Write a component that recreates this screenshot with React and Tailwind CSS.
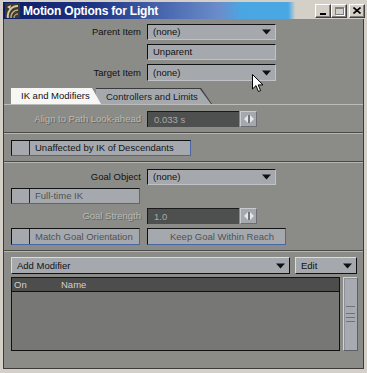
import React from 'react';

const font = "font-['Liberation_Sans',Arial,sans-serif]";

const Arrow = () => (
    <svg width="9" height="6" viewBox="0 0 9 6" className="shrink-0">
        <path d="M0 0.5 H9 L4.5 5.5 Z" fill="#111" />
    </svg>
);

const Dropdown = ({ text, w, className = '' }) => (
    <div className={`h-full flex items-center bg-[#a5a9ae] border-t border-l border-t-[#111] border-l-[#111] border-b border-r border-b-[#bfc3c8] border-r-[#bfc3c8] pl-[5px] pr-[4px] ${w} ${className}`}>
        <span className="text-[#111]">{text}</span>
        <span className="ml-auto"><Arrow /></span>
    </div>
);

const Spin = () => (
    <div className="h-full w-[17px] ml-[1px] flex items-center justify-center bg-[#a5a9ae] border border-t-[#c8ccd0] border-l-[#c8ccd0] border-b-[#6a6e72] border-r-[#6a6e72]">
        <svg width="10" height="8" viewBox="0 0 10 8">
            <path d="M4 0 L0 4 L4 8 Z" fill="#e6e6e6" />
            <path d="M6 0 L10 4 L6 8 Z" fill="#e6e6e6" />
            <rect x="4.3" y="0" width="1.4" height="8" fill="#5a5e62" />
        </svg>
    </div>
);

const DarkField = ({ value }) => (
    <div className="h-full w-[92px] flex items-center bg-[#4e4f4f] border-t border-l border-[#1a1a1a] pl-[6px] text-[#a9aaa8]">
        {value}
    </div>
);

const Row = ({ label, disabled, h = 'h-[16px]', mt, children }) => (
    <div className={`flex items-center pl-[7px] ${h} ${mt}`}>
        <span className={`w-[130px] text-right ${disabled ? 'text-[#b9bab5] [text-shadow:1px_1px_0_#64655f]' : 'text-[#111]'}`}>{label}</span>
        <div className="ml-[6px] h-full flex">{children}</div>
    </div>
);

const Toggle = ({ text, w, box = true, dim, center }) => (
    <div className={`h-full flex items-stretch bg-[#a5a9ae] border border-t-[#111] border-l-[#111] border-b-[#4767a8] border-r-[#4767a8] ${w}`}>
        {box && <div className="w-[18px] border-r border-r-[#2a2a2a] shrink-0" />}
        <span className={`flex items-center ${center ? 'pl-[22px]' : 'pl-[5px]'} ${dim ? 'text-[#4e5256]' : 'text-[#151515]'}`}>{text}</span>
    </div>
);

const Separator = ({ mt }) => (
    <div className={`${mt} h-[2px] border-t border-t-[#4a4b48] border-b border-b-[#b6b7b2]`} />
);

const WinButton = ({ children, className = '' }) => (
    <div className={`w-[16px] h-[14px] bg-[#d4d0c8] border border-t-white border-l-white border-b-[#404040] border-r-[#404040] shadow-[inset_-1px_-1px_#808080] flex items-center justify-center ${className}`}>
        {children}
    </div>
);

export default function App() {
    return (
        <div className={`relative w-[367px] h-[373px] bg-[#d4d0c8] pt-[2px] px-[3px] text-[9.5px] leading-none select-none overflow-hidden ${font}`}>
            {/* title bar */}
            <div className="h-[17px] flex items-center bg-[linear-gradient(to_right,#0c1c66_0%,#1e3484_25%,#4a68b0_45%,#6b8dca_60%,#4aa6e2_66%,#48a8e4_79%,#d4d0c8_81%)]">
                <svg width="15" height="15" viewBox="0 0 15 15" className="ml-[2px] shrink-0">
                    <rect width="15" height="15" fill="#3b3a30" />
                    <path d="M3 15 A10 10 0 0 1 13 3" stroke="#d8c79a" strokeWidth="2" fill="none" />
                    <path d="M6 15 A7 7 0 0 1 13 7" stroke="#bfae82" strokeWidth="1.5" fill="none" />
                    <path d="M9 15 A4 4 0 0 1 13 11" stroke="#a8996f" strokeWidth="1.5" fill="none" />
                    <path d="M2 4 L6 2 L5 6 Z" fill="#e0d4b0" />
                </svg>
                <span className="ml-[3px] text-white font-bold text-[12px] tracking-[-0.2px]">Motion Options for Light</span>
                <div className="ml-auto mr-[-1px] flex items-center">
                    <WinButton>
                        <div className="w-[6px] h-[2px] bg-black mt-[6px] mr-[1px]" />
                    </WinButton>
                    <WinButton>
                        <div className="w-[9px] h-[8px] border border-[#808080] border-t-2 shadow-[1px_1px_0_white]" />
                    </WinButton>
                    <WinButton className="ml-[2px]">
                        <svg width="8" height="7" viewBox="0 0 8 7">
                            <path d="M0.5 0.5 L7.5 6.5 M7.5 0.5 L0.5 6.5" stroke="#000" strokeWidth="1.6" />
                        </svg>
                    </WinButton>
                </div>
            </div>

            {/* body */}
            <div className="h-[350px] bg-[#8b8c87] border-l border-r border-b border-[#3c3c3a] flex flex-col">
                <Row label="Parent Item" mt="mt-[5px]">
                    <Dropdown text="(none)" w="w-[129px]" />
                </Row>
                <Row label="" mt="mt-[4px]">
                    <div className="h-full w-[129px] flex items-center bg-[#a5a9ae] border-t border-l border-t-[#111] border-l-[#111] border-b border-r border-b-[#bfc3c8] border-r-[#bfc3c8] pl-[5px] text-[#111]">
                        Unparent
                    </div>
                </Row>
                <Row label="Target Item" h="h-[17px]" mt="mt-[4px]">
                    <Dropdown text="(none)" w="w-[129px]" />
                </Row>

                {/* tabs */}
                <div className="mt-[7px] h-[16px] flex pl-[7px]">
                    <div className="relative z-10 w-[90px] h-full bg-[#f6f6f4] [clip-path:polygon(0_0,calc(100%-9px)_0,100%_100%,0_100%)] flex items-center pl-[10px] text-[#111]">
                        IK and Modifiers
                    </div>
                    <div className="-ml-[5px] w-[116px] h-full bg-[#3a3b3c] [clip-path:polygon(0_0,calc(100%-11px)_0,100%_100%,0_100%)] pt-[1px]">
                        <div className="h-full bg-[#a5a9ae] [clip-path:polygon(0_0,calc(100%-12px)_0,calc(100%-1px)_100%,0_100%)] flex items-center pl-[10px] text-[#1a1a1a]">
                            Controllers and Limits
                        </div>
                    </div>
                </div>
                <div className="h-[1px] bg-[#bcbdb8]" />

                <Row label="Align to Path Look-ahead" disabled mt="mt-[6px]">
                    <DarkField value="0.033 s" />
                    <Spin />
                </Row>

                <Separator mt="mt-[5px]" />

                <div className="mt-[6px] h-[16px] pl-[7px] flex">
                    <Toggle text="Unaffected by IK of Descendants" w="w-[180px]" />
                </div>

                <Separator mt="mt-[5px]" />

                <Row label="Goal Object" mt="mt-[6px]">
                    <Dropdown text="(none)" w="w-[129px]" />
                </Row>
                <div className="mt-[3px] h-[16px] pl-[7px] flex">
                    <Toggle text="Full-time IK" w="w-[129px]" dim />
                </div>
                <Row label="Goal Strength" disabled mt="mt-[4px]">
                    <DarkField value="1.0" />
                    <Spin />
                </Row>
                <div className="mt-[4px] h-[17px] pl-[7px] flex gap-[7px]">
                    <Toggle text="Match Goal Orientation" w="w-[129px]" dim />
                    <Toggle text="Keep Goal Within Reach" w="w-[139px]" box={false} dim center />
                </div>

                <Separator mt="mt-[5px]" />

                <div className="mt-[5px] h-[17px] pl-[7px] flex gap-[5px]">
                    <Dropdown text="Add Modifier" w="w-[279px]" className="!border-b-[#111] !border-r-[#111] !border-t-[#d8dce0] !border-l-[#d8dce0]" />
                    <Dropdown text="Edit" w="w-[62px]" className="!border-b-[#111] !border-r-[#111] !border-t-[#d8dce0] !border-l-[#d8dce0]" />
                </div>

                {/* modifier list */}
                <div className="mt-[3px] h-[74px] pl-[7px] flex gap-[3px]">
                    <div className="w-[329px] h-full border border-[#111] bg-[#777876] flex flex-col">
                        <div className="h-[14px] bg-[#4d4d4d] border-b border-[#111] flex items-center text-[#cfd0cc]">
                            <span className="pl-[2px] w-[49px]">On</span>
                            <span>Name</span>
                        </div>
                    </div>
                    <div className="w-[15px] h-full bg-[#a7abb1] border border-t-[#d0d4d8] border-l-[#d0d4d8] border-b-[#5c6064] border-r-[#5c6064] shadow-[inset_1px_1px_0_#8c9096] flex flex-col items-center justify-center gap-[3px]">
                        <div className="w-[9px] h-[1px] bg-[#6e737a]" />
                        <div className="w-[9px] h-[1px] bg-[#6e737a] mt-[3px]" />
                        <div className="w-[9px] h-[1px] bg-[#6e737a]" />
                        <div className="w-[9px] h-[1px] bg-[#6e737a]" />
                    </div>
                </div>
            </div>

            {/* mouse cursor */}
            <svg width="12" height="19" viewBox="0 0 12 19" className="absolute left-[252px] top-[74px] z-20">
                <path d="M0.5 0.5 L0.5 15 L4 11.6 L6.4 17.5 L8.6 16.6 L6.2 10.9 L11 10.9 Z" fill="#fff" stroke="#000" strokeWidth="1" strokeLinejoin="miter" />
            </svg>
        </div>
    );
}
